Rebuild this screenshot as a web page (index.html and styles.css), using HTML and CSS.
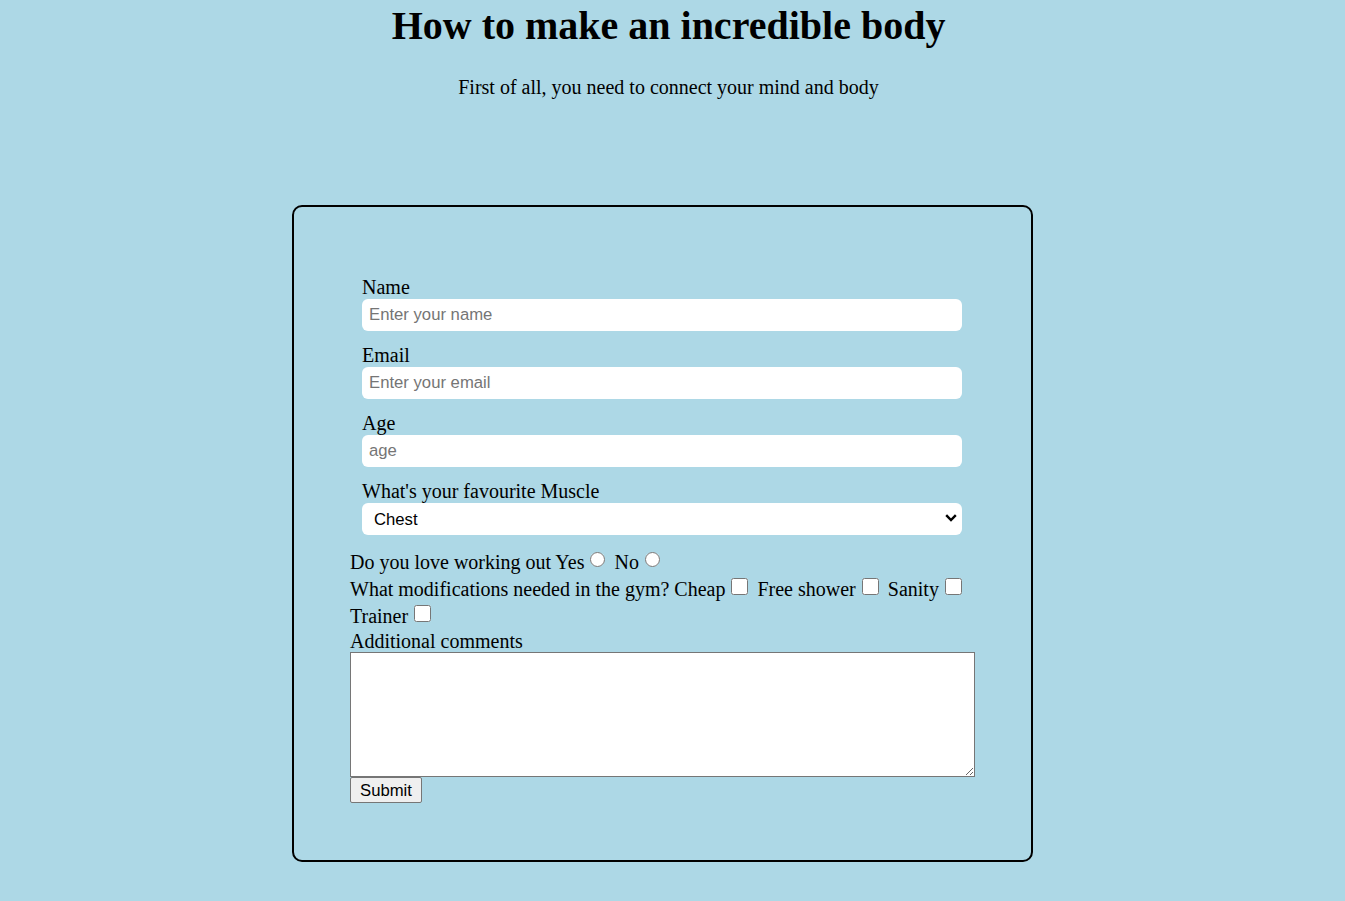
FILE: index.html
```html
<!DOCTYPE html>
<html lang="en">
<head>
<meta charset="utf-8">
<title>How to make an incredible body</title>
<link rel="stylesheet" href="styles.css">
</head>
<body>
<h1 class="title">How to make an incredible body</h1>
<p class="subtitle">First of all, you need to connect your mind and body</p>
<form class="survey">
  <div class="field">
    <label class="field-label" for="name">Name</label>
    <input class="text-input" id="name" type="text" placeholder="Enter your name">
  </div>
  <div class="field">
    <label class="field-label" for="email">Email</label>
    <input class="text-input" id="email" type="email" placeholder="Enter your email">
  </div>
  <div class="field">
    <label class="field-label" for="age">Age</label>
    <input class="text-input" id="age" type="number" placeholder="age">
  </div>
  <div class="field field-last">
    <label class="field-label" for="muscle">What's your favourite Muscle</label>
    <div class="select-wrap">
      <select class="select-input" id="muscle">
        <option>Chest</option>
        <option>Back</option>
        <option>Legs</option>
      </select>
      <svg class="chevron" width="12" height="8" viewBox="0 0 12 8" aria-hidden="true"><path d="M1.2 1.2 L6 6 L10.8 1.2" fill="none" stroke="#000" stroke-width="2.4"/></svg>
    </div>
  </div>
  <div class="line">Do you love working out <label>Yes<input class="radio" type="radio" name="love"></label> <label>No<input class="radio" type="radio" name="love"></label></div>
  <div class="line">What modifications needed in the gym? <label>Cheap<input class="check" type="checkbox"></label> <label>Free shower<input class="check" type="checkbox"></label> <label>Sanity<input class="check" type="checkbox"></label> <label>Trainer<input class="check" type="checkbox"></label></div>
  <label class="comments-label" for="comments">Additional comments</label>
  <textarea class="comments" id="comments"></textarea>
  <button class="submit" type="submit">Submit</button>
</form>
</body>
</html>
```

FILE: styles.css
```css
html {
  background: #add8e6;
}
body {
  margin: 0 8px 0 0;
  font-family: "Liberation Serif", "Times New Roman", serif;
  color: #000;
}
.title {
  text-align: center;
  font-size: 40px;
  margin: 3px 0 0;
  line-height: 46px;
}
.subtitle {
  text-align: center;
  font-size: 20px;
  margin: 27px 0 0;
  line-height: 23px;
}
.survey {
  box-sizing: border-box;
  width: 741px;
  margin: 106px 0 40px 292px;
  border: 2px solid #000;
  border-radius: 10px;
  padding: 69px 55px 57px 56px;
  font-size: 20px;
}
.field {
  padding: 0 12px;
  margin-bottom: 13px;
}
.field-last {
  margin-bottom: 14px;
}
.field-label {
  display: block;
  line-height: 23px;
}
.text-input,
.select-input {
  display: block;
  box-sizing: border-box;
  width: 600px;
  height: 32px;
  border: none;
  border-radius: 6px;
  background: #fff;
  font-family: "Liberation Sans", Arial, sans-serif;
  font-size: 16.7px;
  padding: 0 7px;
  margin: 0;
  color: #000;
}
.text-input::placeholder {
  color: #757575;
}
.select-wrap {
  position: relative;
  width: 600px;
}
.select-input {
  appearance: none;
  -webkit-appearance: none;
  padding: 0 12px;
}
.chevron {
  position: absolute;
  right: 5px;
  top: 11px;
  pointer-events: none;
}
.line {
  line-height: 27px;
}
.radio {
  box-sizing: border-box;
  width: 15px;
  height: 15px;
  margin: 0 4px 0 6px;
  vertical-align: 2px;
}
.check {
  box-sizing: border-box;
  width: 17px;
  height: 17px;
  margin: 0 4px 0 6px;
  vertical-align: 1px;
}
.comments-label {
  display: block;
  line-height: 22px;
}
.comments {
  display: block;
  box-sizing: border-box;
  width: 625px;
  height: 125px;
  margin: 0;
  border: 1px solid #767676;
  background: #fff;
}
.submit {
  display: block;
  box-sizing: border-box;
  height: 26px;
  margin: 0;
  font-family: "Liberation Sans", Arial, sans-serif;
  font-size: 16.7px;
  line-height: 19px;
  padding: 1px 9px;
  border: 1px solid #767676;
  border-radius: 2px;
  background: #efefef;
  color: #000;
}
```
